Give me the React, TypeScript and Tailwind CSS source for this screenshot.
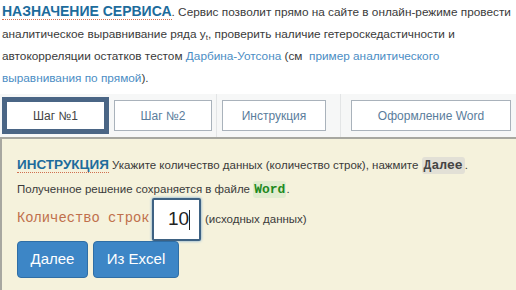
import React from 'react';

export default function App() {
  return (
    <div className="w-[516px] h-[290px] overflow-hidden bg-white font-['Liberation_Sans',Arial,sans-serif] text-[11.5px] text-[#3a3a3a]">
      {/* Description */}
      <p className="px-[2px] leading-[22px] whitespace-nowrap text-[11.8px]">
        <span className="font-bold text-[14px] text-[#1d6c9c] border-b border-dotted border-[#d07050]">НАЗНАЧЕНИЕ СЕРВИСА</span>. Сервис позволит прямо на сайте в онлайн-режиме провести
        <br />
        аналитическое выравнивание ряда y<sub className="text-[8px]">t</sub>, проверить наличие гетероскедастичности и
        <br />
        автокорреляции остатков тестом <span className="text-[#4b8dc4]">Дарбина-Уотсона</span> (см&nbsp; <span className="text-[#4b8dc4]">пример аналитического</span>
        <br />
        <span className="text-[#4b8dc4]">выравнивания по прямой</span>).
      </p>

      {/* Tabs */}
      <div className="mt-[5px] h-[43px] flex items-center bg-[#f6f7f7] pl-[2px]">
        <div className="w-[107px] h-[37px] border-[5px] border-[#4a6585] bg-white flex items-center justify-center text-[12px] text-[#444]">
          Шаг №1
        </div>
        <div className="w-[98px] ml-[5px] h-[31px] border border-[#a9b2bb] bg-white flex items-center justify-center text-[12px] text-[#5a7d9c]">
          Шаг №2
        </div>
        <div className="w-px h-[43px] ml-[4px] bg-[#e3e5e6]" />
        <div className="w-[104px] ml-[5px] h-[31px] border border-[#a9b2bb] bg-white flex items-center justify-center text-[12px] text-[#5a7d9c]">
          Инструкция
        </div>
        <div className="w-px h-[43px] ml-[14px] bg-[#e3e5e6]" />
        <div className="w-[160px] ml-[10px] h-[31px] border border-[#a9b2bb] bg-white flex items-center justify-center text-[12px] text-[#5a7d9c]">
          Оформление Word
        </div>
      </div>

      {/* Panel */}
      <div className="h-[154px] bg-[#f5f2dc] border-t-2 border-l-2 border-[#a7a7a0] pl-[15px] pt-[14px]">
        <div className="h-[24px] leading-[24px] whitespace-nowrap">
          <span className="font-bold text-[13.5px] text-[#1d6c9c] border-b border-dotted border-[#d07050]">ИНСТРУКЦИЯ</span>{' '}
          <span>Укажите количество данных (количество строк), нажмите</span>{' '}
          <span className="font-['Liberation_Mono',monospace] font-bold text-[13px] text-[#444] bg-[#e2e0d6] rounded-[3px] px-[2px] py-[1px]">Далее</span>.
        </div>
        <div className="h-[24px] leading-[24px] whitespace-nowrap">
          Полученное решение сохраняется в файле{' '}
          <span className="font-['Liberation_Mono',monospace] font-bold text-[13px] text-[#1e8a1e] bg-[#e1eccf] rounded-[3px] px-[1px] py-[1px]">Word</span>.
        </div>
        <div className="flex items-center -mt-[3px] h-[43px]">
          <span className="font-['Liberation_Mono',monospace] text-[13.8px] text-[#c0704c] w-[135px] whitespace-nowrap overflow-hidden">Количество строк</span>
          <div className="w-[49px] h-[43px] bg-white border-2 border-[#3e6283] rounded-[2px] shadow-[0_0_3px_#6aa0d0] flex items-center pl-[14px] text-[19px] text-[#222]">
            10<span className="w-px h-[20px] bg-[#222]" />
          </div>
          <span className="ml-[4px]">(исходных данных)</span>
        </div>
        <div className="flex gap-[5px]">
          <button className="w-[71px] h-[37px] bg-[#3d86c6] border border-[#2f6ea5] rounded-[4px] text-white text-[15px]">Далее</button>
          <button className="w-[86px] h-[37px] bg-[#3d86c6] border border-[#2f6ea5] rounded-[4px] text-white text-[15px]">Из Excel</button>
        </div>
      </div>
    </div>
  );
}
